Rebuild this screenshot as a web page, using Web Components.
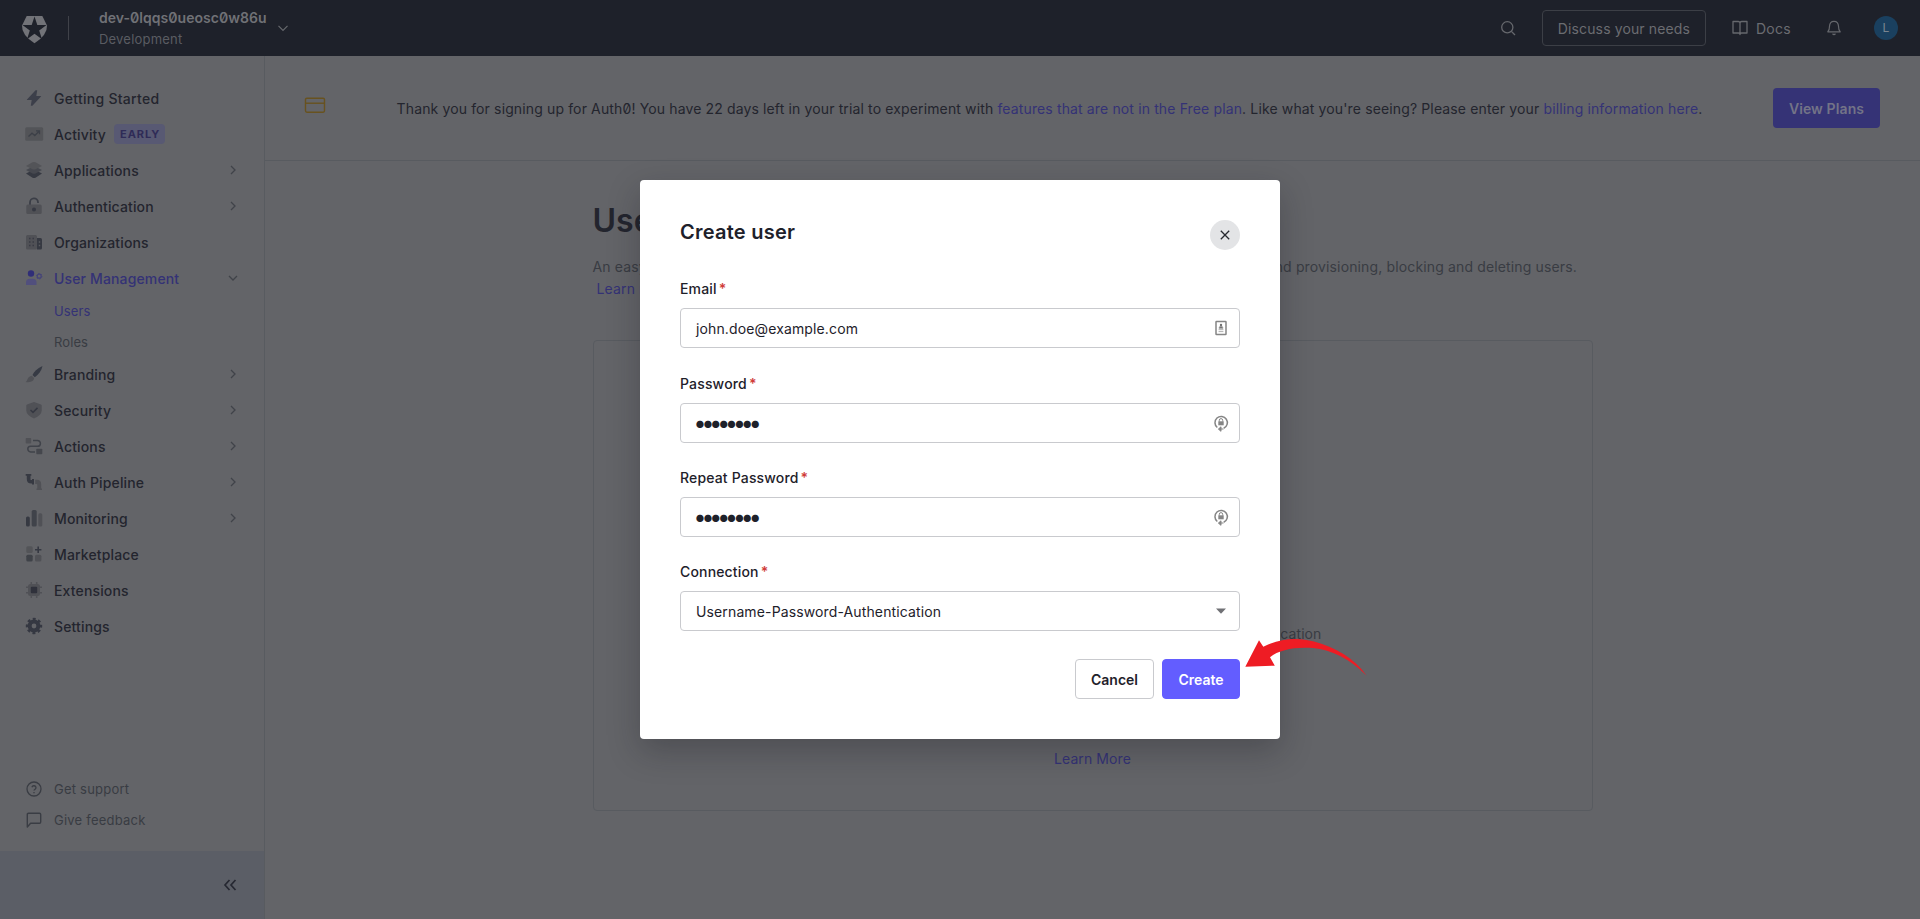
<!DOCTYPE html>
<html lang="en">
<head>
<meta charset="utf-8">
<title>Create user</title>
<style>
html,body{margin:0;height:100%;overflow:hidden;background:#636468}
body{font-family:Inter,"Liberation Sans",sans-serif;font-size:14px;color:#23252e;font-feature-settings:"zero"}
</style>
</head>
<body>
<app-shell></app-shell>
<script>
const ICONS = {
  bolt: '<path d="M9.6.2 1 9.4q-.5.7.4.7h4.3L4.8 15.800 6.400 15.800 15 6.600q.5-.7-.4-.7h-4.300L11.200.2z" fill="#3c3f4a"/>',
  activity: '<rect x="-.8" y="1.300" width="18" height="13.500" rx="1.500" fill="#535458"/><path d="M2.500 10.500 6 7.200l2.800 2.300 4.500-4.500M10 4.800h3.500v3.500" fill="none" stroke="#3d4048" stroke-width="1.300"/>',
  layers: '<path d="M8 7.500l8 4-6.500 4.200q-1.500.6-3 0L0 11.500z" fill="#363942"/><path d="M8 4l8 4-6.500 3.500q-1.500.6-3 0L0 8z" fill="#46484f"/><path d="M6.500.3q1.500-.6 3 0L16 4 9.500 7.300q-1.500.6-3 0L0 4z" fill="#535458"/>',
  lock: '<path d="M4 8V4.500a4 4 0 0 1 8-.3V5" fill="none" stroke="#3b3e47" stroke-width="1.800"/><rect x=".3" y="6.500" width="15.400" height="9.500" rx="1.500" fill="#505156"/><circle cx="8" cy="11.500" r="2" fill="#353842"/>',
  org: '<rect x="0" y="1" width="11" height="14.500" rx="1.500" fill="#505156"/><path d="M11 4h3.500q1.500 0 1.500 1.500V14q0 1.500-1.500 1.500H11z" fill="#363942"/><path d="M3 4.500h1.500M6.500 4.500H8M3 8h1.500M6.500 8H8M3 11.500h1.500M6.500 11.500H8" stroke="#393b44" stroke-width="1.500"/><path d="M12.800 8h1.400M12.800 11.500h1.400" stroke="#5b5c61" stroke-width="1.400"/>',
  users: '<circle cx="5" cy="3.500" r="3.200" fill="#302e78"/><path d="M0 15v-2.500Q0 8.800 4 8.800h2.500q4 0 4 3.700V15z" fill="#514f7d"/><circle cx="13.200" cy="6.200" r="2" fill="none" stroke="#454379" stroke-width="1.200"/><circle cx="13.200" cy="6.200" r="2.800" fill="none" stroke="#454379" stroke-width=".9" stroke-dasharray="1.200 1.730"/>',
  brush: '<path d="M16.500 0C11 2.500 8 5.500 6.500 9l2.300 2.200C12.500 8.500 15.500 5 16.500 0z" fill="#363a44"/><path d="M5.800 9.800l2.300 2.300C8 15 5 16.800-.3 16 1.800 15 1 10.500 5.800 9.800z" fill="#505156"/>',
  shield: '<path d="M8 0 15 2.500Q15.700 2.800 15.700 3.500V8.500Q15.700 13 8 16.400.3 13 .3 8.500v-5Q.3 2.800 1 2.500z" fill="#505156"/><path d="M4.500 8 7 10.400l4.500-4.500" fill="none" stroke="#353842" stroke-width="1.500"/>',
  actions: '<rect x="-.3" y="0" width="5.500" height="5.500" rx=".8" fill="#505156"/><rect x="10.300" y="10.800" width="6" height="5.500" rx=".8" fill="#45474d"/><path d="M7 2.500h4.500a2.900 2.900 0 0 1 0 5.800H4.600a2.800 2.800 0 0 0 0 5.600H9" fill="none" stroke="#40434a" stroke-width="1.500"/>',
  pipe: '<path d="M-.3 0H5.300V1.800H4.500V5.500Q4.500 6 5 6H6V5H8v5.500H6V9.500Q.8 9.800.8 5V1.800H-.3z" fill="#363942"/><path d="M9.200 5.800h1.800q4.200.2 4.200 4.500v4.200h.8V16H10.500v-1.500h.8V10.800q0-.8-.8-.8H9.200z" fill="#505156"/>',
  monitor: '<rect x="0" y="6.500" width="3.800" height="10" rx="1.600" fill="#363942"/><rect x="5.700" y="0" width="5" height="16.500" rx="1.600" fill="#40434a"/><rect x="12.300" y="3.300" width="4" height="13.200" rx="1.600" fill="#505156"/>',
  market: '<rect x=".3" y=".3" width="6.400" height="6.700" rx="1.500" fill="#535458"/><rect x=".3" y="8.800" width="6.400" height="6.700" rx="1.500" fill="#3f4248"/><rect x="9" y="8.800" width="6.400" height="6.700" rx="1.500" fill="#505156"/><path d="M12.200.5v6.400M9 3.700h6.400" stroke="#353842" stroke-width="1.600"/>',
  chip: '<path d="M5.300 0v16M10.700 0v16M0 5.300h16M0 10.700h16" stroke="#505156" stroke-width="1.500"/><rect x="2" y="2" width="12" height="12" rx="2.500" fill="#505156"/><rect x="4.800" y="4.800" width="6.400" height="6.400" rx="1" fill="#2f313b"/>',
  gear: '<circle cx="8" cy="8" r="4.400" fill="none" stroke="#353842" stroke-width="4"/><circle cx="8" cy="8" r="7" fill="none" stroke="#353842" stroke-width="2.400" stroke-dasharray="2.900 2.598" stroke-dashoffset="1.450"/>',
  help: '<g fill="none" stroke="#3a3d44" stroke-width="1.300"><circle cx="8" cy="8" r="7"/><path d="M5.900 6.200a2.100 2.100 0 0 1 4.100.6c0 1.400-2 1.800-2 2.700"/><path d="M8 11v1.200"/></g>',
  chat: '<path d="M1.300 15V2.500q0-1.200 1.200-1.200h11q1.200 0 1.200 1.200V10q0 1.300-1.200 1.300H4.600z" fill="none" stroke="#3a3d44" stroke-width="1.400" stroke-linejoin="round"/>',
  right: '<path d="M6 4l4 4-4 4" fill="none" stroke="#404349" stroke-width="1.300"/>',
  down: '<path d="M4 6l4 4 4-4" fill="none" stroke="#404349" stroke-width="1.300"/>',
  downlight: '<path d="M3.500 5.800 8 10.300l4.500-4.500" fill="none" stroke="#66686d" stroke-width="1.200"/>',
  collapse: '<path d="M7.500 3 3 8l4.500 5M13.500 3 9 8l4.500 5" fill="none" stroke="#262832" stroke-width="1.700"/>',
  search: '<g fill="none" stroke="#66686d" stroke-width="1.300"><circle cx="7.300" cy="7.300" r="5.600"/><path d="M11.400 11.400 15 15"/></g>',
  book: '<path d="M8 3q0-1.500-1.800-1.500H1v11.500h5.500Q8 13 8 14.500q0-1.500 1.500-1.500H15V1.500H9.800Q8 1.500 8 3v11.500" fill="none" stroke="#66686d" stroke-width="1.300" stroke-linejoin="round"/>',
  bell: '<path d="M8 1.300q4.300 0 4.500 5 0 4 1.700 5.500H1.800Q3.500 10.300 3.500 6.300q.2-5 4.500-5zM6.500 13.800q1.500 1.400 3 0" fill="none" stroke="#66686d" stroke-width="1.200" stroke-linejoin="round"/>',
  card: '<rect x="-1.500" y="1.200" width="19" height="14" rx="1.400" fill="none" stroke="#68521f" stroke-width="1.400"/><path d="M-1.500 6.200h19" stroke="#68521f" stroke-width="1.400"/>',
  logo: '<path d="M3 0H13L16 6Q16.300 12 8 17.500-.3 12 0 6z" fill="#727378"/><path d="M8 .3 9.800 5.800h5.900L11 9.200l1.800 5.600L8 11.400l-4.800 3.400L5 9.200.3 5.800h5.900z" fill="#1e212a"/>',
  close: '<path d="M3.800 3.800l8.400 8.400M12.200 3.800l-8.400 8.400" stroke="#26282f" stroke-width="1.300"/>',
  contact: '<rect x="3" y="1.500" width="10" height="13" rx=".5" fill="#fff" stroke="#858585" stroke-width="1.500"/><circle cx="8" cy="5" r="1.200" fill="#707070"/><path d="M6 8.300q0-2 2-2t2 2zM5.600 9.700h4.800M5.600 11.600h4.800" fill="#707070" stroke="#999" stroke-width=".8"/>',
  passkey: '<path d="M4.300 12.500a6.200 6.200 0 1 1 6.400.8" fill="none" stroke="#858585" stroke-width="1.500"/><path d="M6.300 6.500V5.300a1.700 1.700 0 0 1 3.400 0v1.200" fill="none" stroke="#858585"/><rect x="5.300" y="6.300" width="5.400" height="4" fill="#858585"/><path d="M8 11.800v4.500l-2.600-2.200zM8 14h2.500" stroke="#858585" fill="#858585" stroke-width="1"/>',
  caret: '<path d="M3 5.500h10L8 10.700z" fill="#707175"/>'
};
class UiIcon extends HTMLElement{
  connectedCallback(){
    const s=this.getAttribute('size')||16;
    this.attachShadow({mode:'open'}).innerHTML=`<style>:host{display:block;flex:none;width:${s}px;height:${s}px}svg{display:block;overflow:visible}</style><svg width="${s}" height="${s}" viewBox="0 0 16 16">${ICONS[this.getAttribute('name')]}</svg>`;
  }
}
customElements.define('ui-icon',UiIcon);

function define(name,html){
  const t=document.createElement('template');t.innerHTML=html;
  customElements.define(name,class extends HTMLElement{
    constructor(){super();this.attachShadow({mode:'open'}).append(t.content.cloneNode(true));}
  });
}

class NavItem extends HTMLElement{
  connectedCallback(){
    const i=this.getAttribute('icon'),c=this.getAttribute('chev'),b=this.getAttribute('badge');
    this.attachShadow({mode:'open'}).innerHTML=`<style>
    :host{display:flex;align-items:center;height:36px;padding:0 24px 0 26px;gap:12px;font-weight:550;letter-spacing:.14px}
    :host([active]){color:#343276}
    :host([sub]){height:31px;padding-left:54px;font-size:13px;font-weight:400;color:#393c43;letter-spacing:.1px}
    :host([sub][active]){color:#343276}
    :host([small]){height:31px;font-size:13px;font-weight:400;color:#393c43;letter-spacing:.22px}
    b{font-size:11px;font-weight:700;letter-spacing:.95px;color:#2f2b57;background:#585973;border-radius:4px;height:20px;line-height:20px;padding:0 5px 0 6px;margin-left:-4px}
    .c{margin-left:auto;margin-right:-1px}
    </style>${i?`<ui-icon name="${i}"></ui-icon>`:''}<slot></slot>${b?`<b>${b}</b>`:''}${c?`<ui-icon class="c" name="${c}"></ui-icon>`:''}`;
  }
}
customElements.define('nav-item',NavItem);

define('side-nav',`<style>
:host{display:flex;flex-direction:column;box-sizing:border-box;width:265px;border-right:1px solid #585b60}
nav{padding-top:24px;flex:1}
.sub{margin:-1px 0}
.help{padding-bottom:16px}
footer{height:68px;background:#5b5e66;display:flex;align-items:center;justify-content:flex-end;padding-right:26px}
</style>
<nav>
<nav-item icon="bolt" style="letter-spacing:.28px">Getting Started</nav-item>
<nav-item icon="activity" badge="EARLY">Activity</nav-item>
<nav-item icon="layers" chev="right">Applications</nav-item>
<nav-item icon="lock" chev="right">Authentication</nav-item>
<nav-item icon="org">Organizations</nav-item>
<nav-item icon="users" chev="down" active>User Management</nav-item>
<div class="sub"><nav-item sub active>Users</nav-item><nav-item sub>Roles</nav-item></div>
<nav-item icon="brush" chev="right">Branding</nav-item>
<nav-item icon="shield" chev="right">Security</nav-item>
<nav-item icon="actions" chev="right">Actions</nav-item>
<nav-item icon="pipe" chev="right">Auth Pipeline</nav-item>
<nav-item icon="monitor" chev="right">Monitoring</nav-item>
<nav-item icon="market">Marketplace</nav-item>
<nav-item icon="chip">Extensions</nav-item>
<nav-item icon="gear">Settings</nav-item>
</nav>
<div class="help"><nav-item small icon="help">Get support</nav-item><nav-item small icon="chat">Give feedback</nav-item></div>
<footer><ui-icon name="collapse"></ui-icon></footer>`);

define('top-bar',`<style>
:host{display:flex;align-items:center;box-sizing:border-box;height:56px;background:#1e212a;color:#6b6c71;padding:0 22px 0 22px}
.sep{width:1px;height:24px;background:#404249;margin:0 30px 0 21px}
.logo{width:25px;display:flex;justify-content:center}
.tenant{display:flex;flex-direction:column;width:167px;margin-right:9px;padding-top:1px}
.tenant b{font-weight:600;font-size:14px;line-height:20px;letter-spacing:.03px;color:#707176;white-space:nowrap}
.tenant span{font-size:13px;line-height:22px;letter-spacing:.2px;color:#5a5c62}
.r{margin-left:auto;display:flex;align-items:center;font-weight:400;letter-spacing:.3px}
.need{box-sizing:border-box;width:164px;height:36px;line-height:36px;border:1px solid #3c3f46;border-radius:4px;text-align:center;margin:0 26px 0 26px;letter-spacing:.12px}
.docs{display:flex;align-items:center;gap:8px;margin-right:35px}
.av{width:24px;height:24px;border-radius:50%;background:#1a405f;text-align:center;font-size:12px;line-height:24px;margin-left:32px;color:#7a8590}
</style>
<div class="logo"><ui-icon name="logo" size="25"></ui-icon></div><div class="sep"></div>
<div class="tenant"><b>dev-0lqqs0ueosc0w86u</b><span>Development</span></div><ui-icon name="downlight"></ui-icon>
<div class="r"><ui-icon name="search"></ui-icon><div class="need">Discuss your needs</div><div class="docs"><ui-icon name="book"></ui-icon><span>Docs</span></div><ui-icon name="bell"></ui-icon><div class="av">L</div></div>`);

define('trial-banner',`<style>
:host{display:flex;align-items:center;box-sizing:border-box;height:105px;border-bottom:1px solid #585b60;padding:0 40px;white-space:nowrap}
.i{margin:0 0 6px 2px}
p{flex:1;margin:0 0 0 3px;text-align:center;letter-spacing:.135px}
a{color:#343276}
.btn{width:107px;height:40px;line-height:41px;border-radius:4px;background:#353376;color:#737387;font-weight:600;text-align:center;letter-spacing:.1px}
</style><ui-icon class="i" name="card"></ui-icon>
<p>Thank you for signing up for Auth0! You have 22 days left in your trial to experiment with <a>features that are not in the Free plan</a>. Like what you're seeing? Please enter your <a>billing information here</a>.</p>
<div class="btn">View Plans</div>`);

define('users-page',`<style>
:host{display:block;width:1000px;margin:0 auto}
h1{margin:0;padding-top:40px;font-size:32px;line-height:40px;font-weight:600;letter-spacing:0}
p{margin:15px 0 0;font-size:14px;line-height:22px;color:#393c43;letter-spacing:.14px;white-space:nowrap}
a{color:#343276}
p a{margin-left:4px}
.empty{box-sizing:border-box;height:471px;margin-top:40px;border:1px solid #585b60;border-radius:4px;display:flex;flex-direction:column;align-items:center;justify-content:flex-end;padding-bottom:40px;color:#393c43;line-height:22px;letter-spacing:.1px}
.m{width:458px;text-align:right;white-space:nowrap;margin-bottom:103px}
</style><h1>Users</h1>
<p>An easy to use UI to help administrators manage user identities including password resets, creating and provisioning, blocking and deleting users.<br><a>Learn more</a></p>
<div class="empty"><div class="m">You can add your first user or let them sign up to your application</div><a>Learn More</a></div>`);

class FormField extends HTMLElement{
  connectedCallback(){
    this.attachShadow({mode:'open'}).innerHTML=`<style>
    :host{display:flex;flex-direction:column}
    label{font-weight:500;line-height:22px;letter-spacing:.16px;color:#1e212a;margin-bottom:8px}
    i{font-style:normal;color:#d03c38;margin-left:2px;font-weight:600}
    .box{box-sizing:border-box;height:40px;border:1px solid #c9cace;border-radius:4px;display:flex;align-items:center;justify-content:space-between;padding:1px 10px 0 15px;color:#1e212a;letter-spacing:.13px}
    :host([pw]) .v{font-size:23px;letter-spacing:-5.05px;line-height:20px;margin:-1px 0 0 -2.5px}
    ui-icon{margin-top:-1px}
    </style><label>${this.getAttribute('label')}<i>*</i></label><div class="box"><span class="v"><slot></slot></span><ui-icon name="${this.getAttribute('icon')}"></ui-icon></div>`;
  }
}
customElements.define('form-field',FormField);

define('create-dialog',`<style>
:host{box-sizing:border-box;width:640px;height:559px;background:#fff;border-radius:4px;padding:40px;display:flex;flex-direction:column;box-shadow:0 12px 32px rgba(20,22,30,.28);color:#1e212a}
header{display:flex;justify-content:space-between;height:58px}
h2{margin:0;font-size:20px;font-weight:600;line-height:24px;letter-spacing:.25px}
.x{width:30px;height:30px;border-radius:50%;background:#e3e4e6;display:flex;align-items:center;justify-content:center}
.f{display:flex;flex-direction:column;gap:24px}
.f :first-child{margin-bottom:1px}
.b{display:flex;justify-content:flex-end;gap:8px;margin-top:28px}
.b div{box-sizing:border-box;height:40px;line-height:40px;border-radius:4px;font-weight:600;text-align:center;width:79px;border:1px solid #c9cace}
.b .p{background:#635dff;border-color:#635dff;color:#fff;width:78px}
</style>
<header><h2>Create user</h2><div class="x"><ui-icon name="close"></ui-icon></div></header>
<div class="f">
<form-field label="Email" icon="contact">john.doe@example.com</form-field>
<form-field pw label="Password" icon="passkey">••••••••</form-field>
<form-field pw label="Repeat Password" icon="passkey">••••••••</form-field>
<form-field label="Connection" icon="caret">Username-Password-Authentication</form-field>
</div>
<div class="b"><div>Cancel</div><div class="p">Create</div></div>`);

define('app-shell',`<style>
:host{display:flex;flex-direction:column;height:100vh;position:relative}
.row{flex:1;display:flex;min-height:0}
main{flex:1;min-width:0}
.layer{position:absolute;inset:0;display:flex;justify-content:center;align-items:center}
.arrow{position:absolute;left:1240px;top:634px}
</style>
<top-bar></top-bar>
<div class="row"><side-nav></side-nav><main><trial-banner></trial-banner><users-page></users-page></main></div>
<div class="layer"><create-dialog></create-dialog></div>
<svg class="arrow" width="130" height="46" viewBox="1240 634 130 46"><path d="M1245.300 666.700 1259 640.300 1263.300 646.800C1278 639 1296 636.500 1314 641.500C1336 647.500 1355 659 1366.500 675.500C1350 659 1332 650 1313 648C1296 646.500 1279 649.500 1270 657.200L1274.800 665.700Z" fill="#ee1c24"/></svg>`);
</script>
</body>
</html>
